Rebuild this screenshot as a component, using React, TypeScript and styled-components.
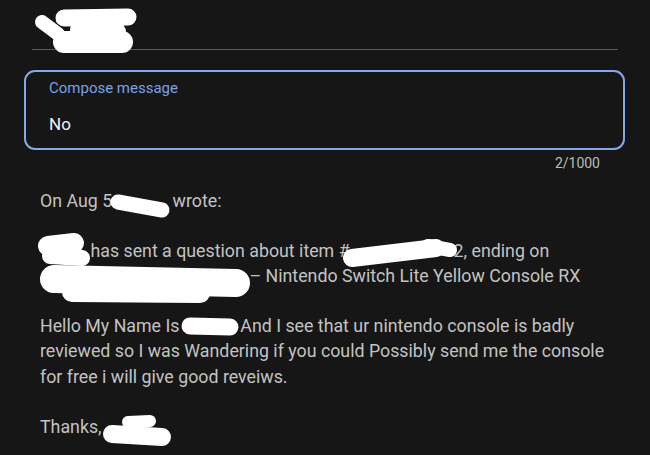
import * as React from "react";
import styled, { createGlobalStyle } from "styled-components";

const BG = "#161616";
const BLUE = "#86a8e6";

const GlobalStyle = createGlobalStyle`
  html, body {
    margin: 0;
    padding: 0;
    background: ${BG};
  }
  body {
    font-family: Roboto, "Noto Sans", sans-serif;
    -webkit-font-smoothing: antialiased;
  }
`;

const Page = styled.div`
  position: relative;
  width: 650px;
  height: 455px;
  overflow: hidden;
  background: ${BG};
  display: flex;
  flex-direction: column;
`;

const Header = styled.div`
  height: 49px;
  margin: 0 32px;
  border-bottom: 1px solid #595959;
  flex-shrink: 0;
`;

const ComposeBox = styled.div`
  margin: 20px 25px 0 24px;
  height: 80px;
  box-sizing: border-box;
  border: 2px solid ${BLUE};
  border-radius: 11px;
  padding: 7px 23px;
  display: flex;
  flex-direction: column;
  flex-shrink: 0;
`;

const Label = styled.div`
  color: #7ba2e4;
  font-size: 15px;
  line-height: 18px;
`;

const Value = styled.div`
  margin-top: 17px;
  color: #f2f2f2;
  font-size: 17px;
  line-height: 20px;
`;

const Counter = styled.div`
  margin-top: 5px;
  padding-right: 50px;
  text-align: right;
  color: #bdbdbd;
  font-size: 14px;
  line-height: 16px;
  flex-shrink: 0;
`;

const Body = styled.div`
  margin-top: 17px;
  padding: 0 32px 0 40px;
  color: #c3c3c3;
  font-size: 17.8px;
  line-height: 25.4px;
`;

const Para = styled.p`
  margin: 0 0 24.4px;
`;

const Hidden = styled.span<{ w: number }>`
  display: inline-block;
  width: ${(p) => p.w}px;
  height: 1em;
`;

const Scribbles = styled.svg`
  position: absolute;
  top: 0;
  left: 0;
  pointer-events: none;
`;

// marker strokes drawn over redacted bits: [x1, y1, x2, y2, thickness]
const strokes: number[][] = [
  [42, 22, 58, 34, 14],
  [64, 18, 128, 17, 17],
  [64, 42, 122, 42, 22],
  [80, 30, 116, 32, 20],
  [118, 202, 162, 210, 15],
  [48, 246, 74, 243, 20],
  [50, 256, 82, 258, 16],
  [352, 258, 436, 248, 18],
  [428, 246, 450, 250, 14],
  [54, 279, 236, 283, 28],
  [72, 292, 200, 293, 20],
  [190, 326, 230, 327, 17],
  [112, 434, 162, 437, 18],
  [128, 422, 150, 421, 12],
];

export default function App() {
  return (
    <Page>
      <GlobalStyle />
      <Header />
      <ComposeBox>
        <Label>Compose message</Label>
        <Value>No</Value>
      </ComposeBox>
      <Counter>2/1000</Counter>
      <Body>
        <Para>
          On Aug 5 <Hidden w={56} />wrote:
        </Para>
        <Para>
          <Hidden w={46} /> has sent a question about item #<Hidden w={104} />2, ending on{" "}
          <Hidden w={205} /> – Nintendo Switch Lite Yellow Console RX
        </Para>
        <Para>
          Hello My Name Is <Hidden w={52} /> And I see that ur nintendo console is badly reviewed so I was
          Wandering if you could Possibly send me the console for free i will give good reveiws.
        </Para>
        <Para>
          Thanks,<Hidden w={60} />
        </Para>
      </Body>
      <Scribbles width={650} height={455} viewBox="0 0 650 455">
        {strokes.map(([x1, y1, x2, y2, t], i) => (
          <line
            key={i}
            x1={x1}
            y1={y1}
            x2={x2}
            y2={y2}
            stroke="#ffffff"
            strokeWidth={t}
            strokeLinecap="round"
          />
        ))}
      </Scribbles>
    </Page>
  );
}
